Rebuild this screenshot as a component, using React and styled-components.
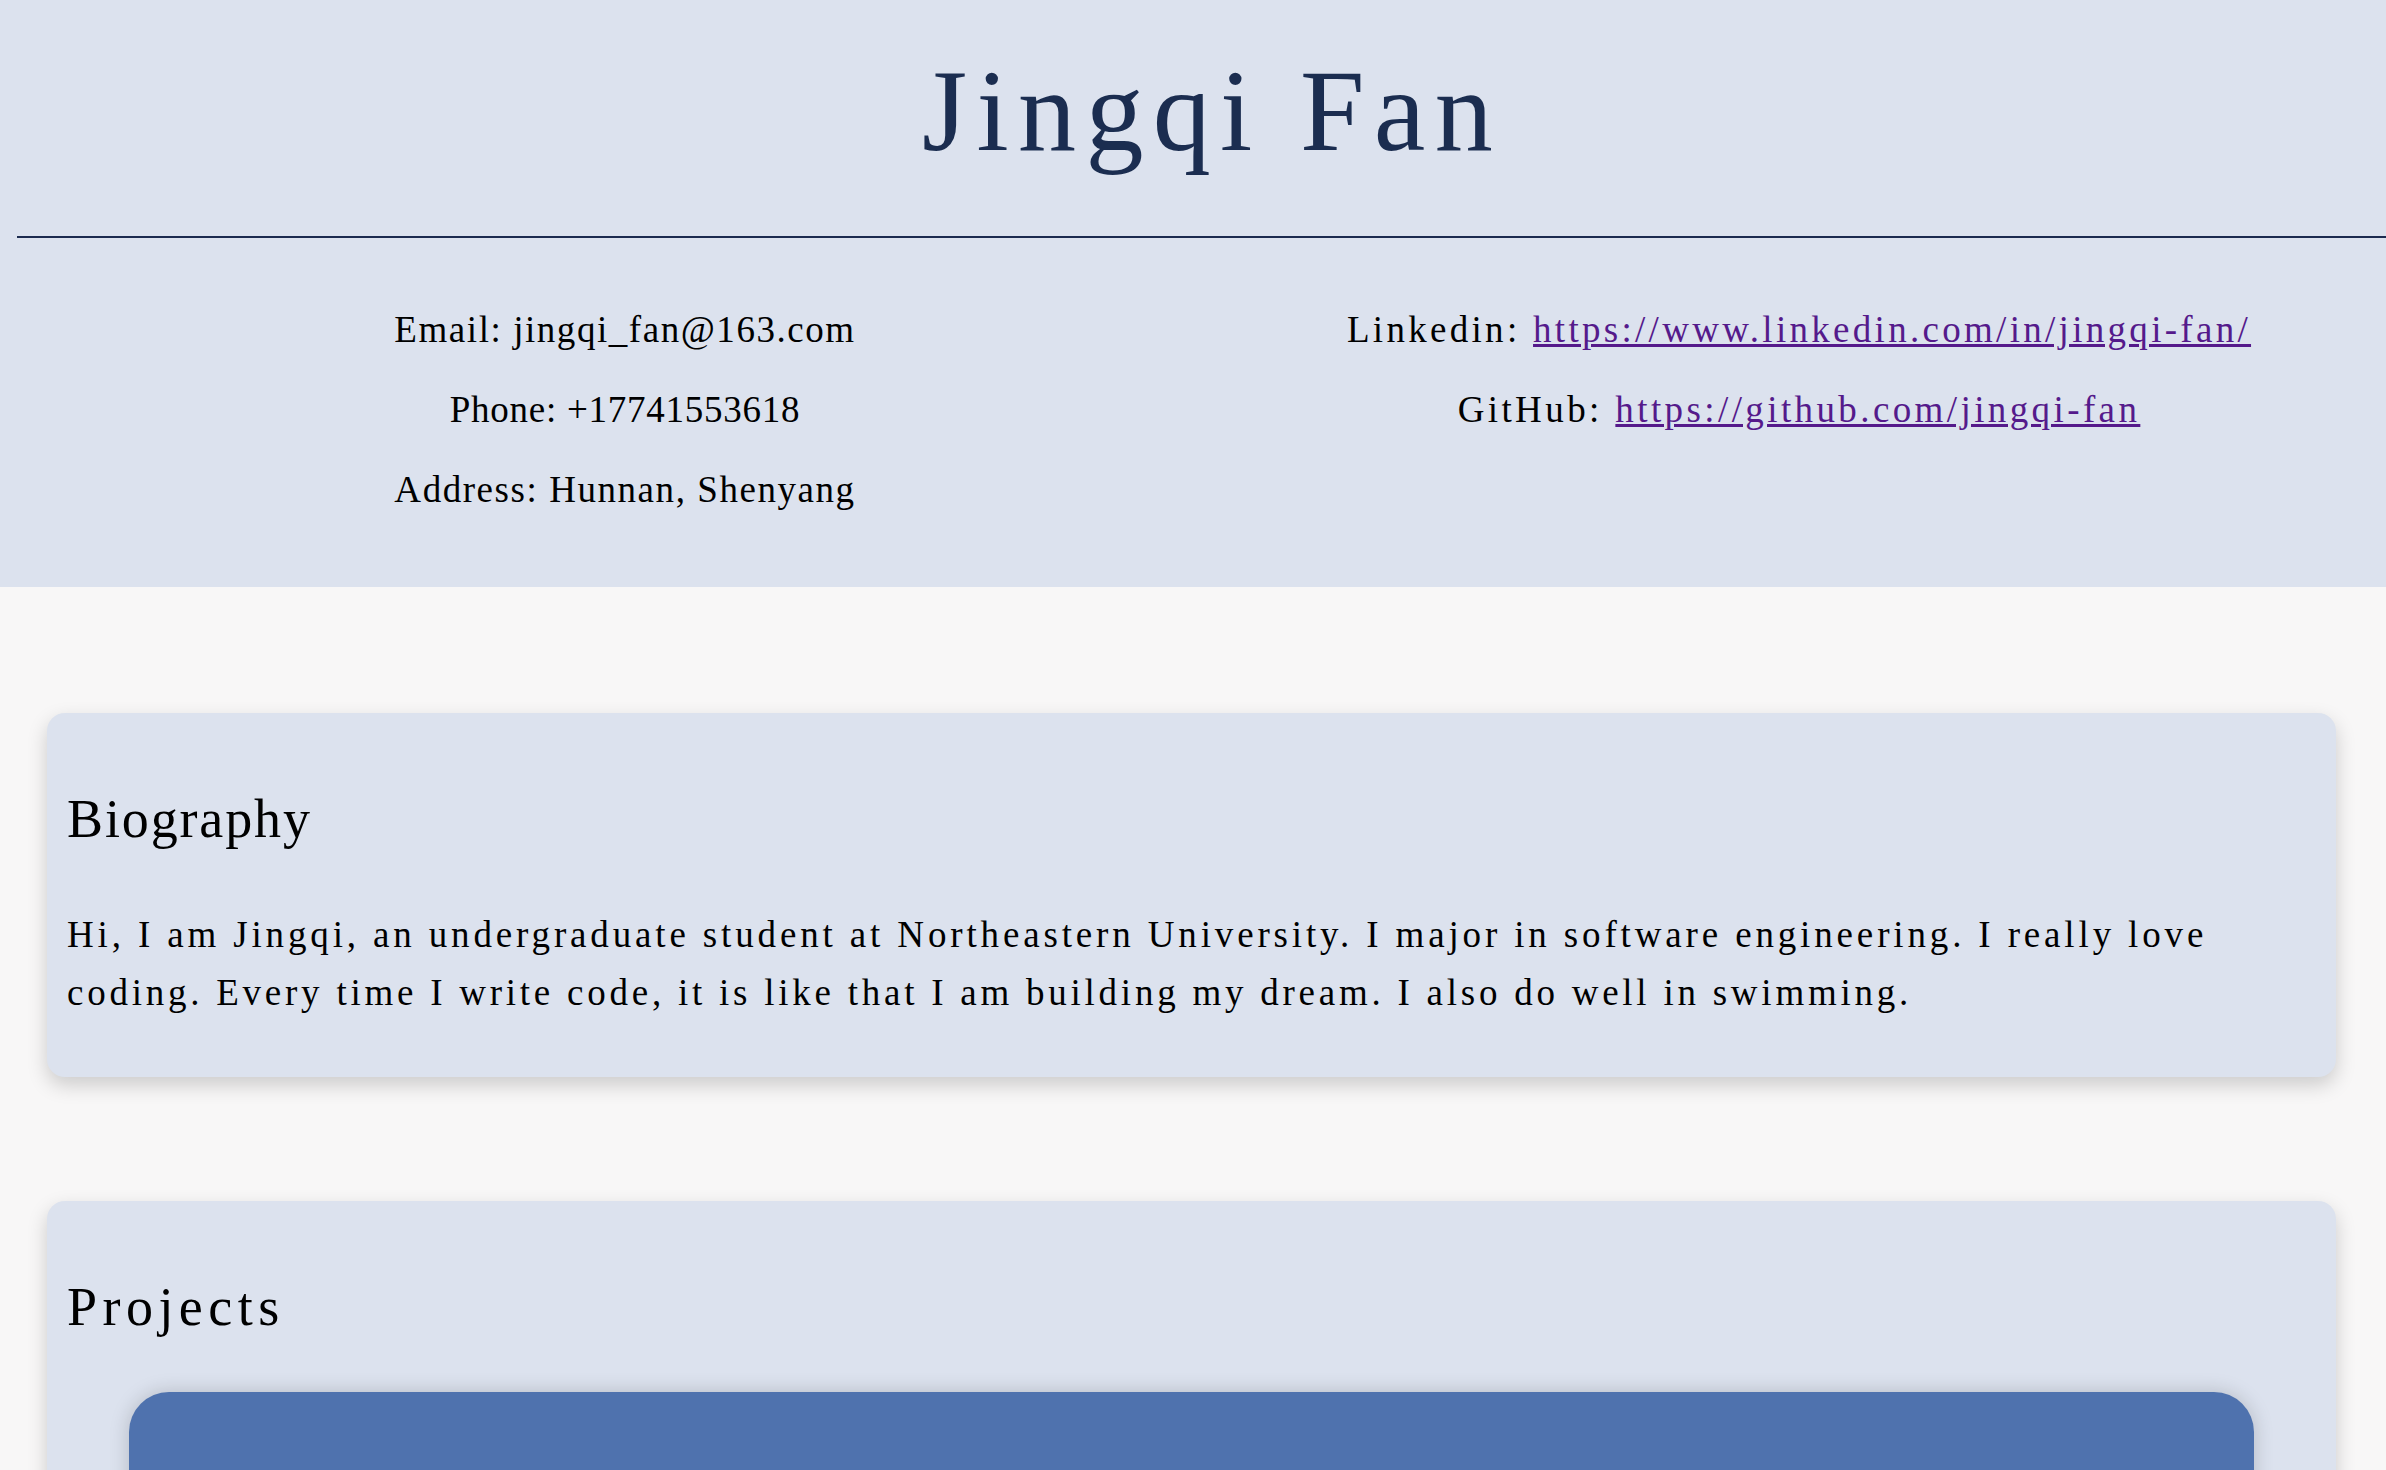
import React, { useMemo } from 'react';
import styled, { createGlobalStyle } from 'styled-components';

const FONT = '"Liberation Serif", "Noto Sans CJK SC", serif'

const GlobalStyle = createGlobalStyle`
  body {
    margin: 0;
    background: #f8f7f7;
    font-family: ${FONT};
    color: #000;
  }
`

// the original page renders every latin glyph in an even cell (half an em wide),
// so spread the serif text out until it takes the same room
let measureCtx = null
function cellSpacing(text, size, cell) {
  if (!measureCtx) measureCtx = document.createElement('canvas').getContext('2d')
  measureCtx.font = `${size}px "Liberation Serif"`
  const natural = measureCtx.measureText(text).width
  return (text.length * cell - natural) / text.length
}

function useCell(text, size, cell) {
  return useMemo(() => ({ letterSpacing: cellSpacing(text, size, cell) + 'px' }), [text, size, cell])
}

const contactsLeft = [
  { label: 'Email', value: 'jingqi_fan@163.com' },
  { label: 'Phone', value: '+17741553618' },
  { label: 'Address', value: 'Hunnan, Shenyang' },
]

const contactsRight = [
  { label: 'Linkedin', href: 'https://www.linkedin.com/in/jingqi-fan/' },
  { label: 'GitHub', href: 'https://github.com/jingqi-fan' },
]

const bioLines = [
  'Hi, I am Jingqi, an undergraduate student at Northeastern University. I major in software engineering. I really love',
  'coding. Every time I write code, it is like that I am building my dream. I also do well in swimming.',
]

function Contact({ label, value, href }) {
  const text = `${label}: ${value || href}`
  const spacing = useCell(text, 37, 18.45)
  return (
    <ContactRow style={spacing}>
      {label}: {href ? <Link href={href}>{href}</Link> : value}
    </ContactRow>
  )
}

function BioLine({ text }) {
  const spacing = useCell(text, 37, 18.45)
  return <Line style={spacing}>{text}</Line>
}

function SectionTitle({ children }) {
  const spacing = useCell(children, 54, 27.2)
  return <CardTitle style={spacing}>{children}</CardTitle>
}

function App() {
  const titleSpacing = useCell('Jingqi Fan', 116, 58)

  return (
    <>
      <GlobalStyle />
      <Header>
        <Title style={titleSpacing}>Jingqi Fan</Title>
        <Divider />
        <Contacts>
          <ContactColumn>
            {contactsLeft.map(item => <Contact key={item.label} {...item} />)}
          </ContactColumn>
          <ContactColumn>
            {contactsRight.map(item => <Contact key={item.label} {...item} />)}
          </ContactColumn>
        </Contacts>
      </Header>

      <Main>
        <Card>
          <SectionTitle>Biography</SectionTitle>
          <Paragraph>
            {bioLines.map(line => <BioLine key={line} text={line} />)}
          </Paragraph>
        </Card>

        <Card>
          <SectionTitle>Projects</SectionTitle>
          <ProjectCard />
        </Card>
      </Main>
    </>
  )
}

const Header = styled.header`
  background: #dce2ee;
  padding: 53px 0 57px 0;
`

const Title = styled.h1`
  margin: 0;
  padding-left: 38px;
  text-align: center;
  font-weight: normal;
  font-size: 116px;
  line-height: 116px;
  color: #1b2d50;
  white-space: nowrap;
`

const Divider = styled.div`
  height: 2px;
  margin: 67px 0 0 17px;
  background: #1c2b4f;
`

const Contacts = styled.div`
  display: grid;
  grid-template-columns: 1fr 1fr;
  margin-top: 52px;
  padding-left: 38px;
`

const ContactColumn = styled.div`
  display: flex;
  flex-direction: column;
  align-items: center;
`

const ContactRow = styled.div`
  font-size: 37px;
  line-height: 80px;
  white-space: nowrap;
`

const Link = styled.a`
  color: #551a8b;
  text-decoration: underline;
`

const Main = styled.main`
  display: flex;
  flex-direction: column;
  gap: 124px;
  padding: 126px 50px 200px 47px;
`

const Card = styled.section`
  background: #dce2ee;
  border-radius: 18px;
  padding: 76px 20px 55px 20px;
  box-shadow: 0 8px 20px rgba(0, 0, 0, 0.18);
`

const CardTitle = styled.h2`
  margin: 0;
  font-weight: normal;
  font-size: 54px;
  line-height: 60px;
  white-space: nowrap;
`

const Paragraph = styled.p`
  margin: 57px 0 0 0;
  font-size: 37px;
  line-height: 58px;
`

const Line = styled.span`
  display: block;
  white-space: nowrap;
`

const ProjectCard = styled.div`
  margin: 55px 62px 0 62px;
  height: 420px;
  background: #4f72ae;
  border-radius: 40px;
  box-shadow: 0 0 20px rgba(0, 0, 0, 0.18);
`

export default App;
